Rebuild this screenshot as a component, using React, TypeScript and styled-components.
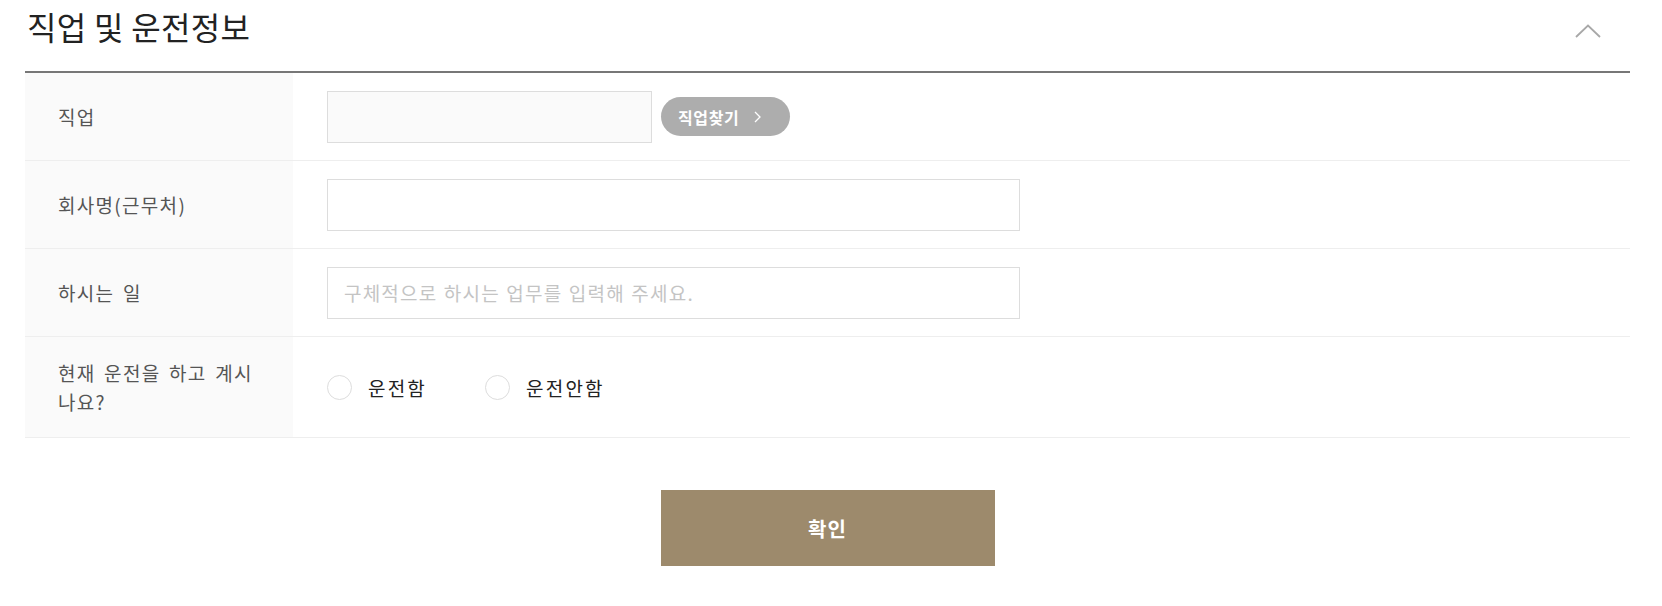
import React from "react";
import styled, { createGlobalStyle } from "styled-components";

const GlobalStyle = createGlobalStyle`
  html, body { margin: 0; padding: 0; background: #fff; }
  body {
    font-family: "Noto Sans CJK KR", "Noto Sans", sans-serif;
    color: #222;
  }
  * { box-sizing: border-box; }
`;

const Page = styled.div`
  padding: 0 32px 40px 25px;
`;

const Header = styled.div`
  display: flex;
  justify-content: space-between;
  align-items: flex-start;
  height: 73px;
  border-bottom: 2px solid #777;
`;

const Title = styled.h2`
  margin: 0;
  padding-left: 2px;
  font-size: 32px;
  font-weight: 400;
  line-height: 52px;
  color: #222;
  letter-spacing: 0.3px;
`;

const ToggleButton = styled.button`
  border: 0;
  background: transparent;
  padding: 0;
  margin: 21px 28px 0 0;
  width: 28px;
  height: 20px;
  display: flex;
  align-items: center;
  justify-content: center;
  cursor: pointer;
`;

const Row = styled.div<{ $tall?: boolean }>`
  display: grid;
  grid-template-columns: 268px 1fr;
  min-height: ${(p) => (p.$tall ? "101px" : "88px")};
  border-bottom: 1px solid #eee;
`;

const Label = styled.div`
  background: #fafafa;
  display: flex;
  align-items: center;
  padding: 0 36px 0 33px;
  font-size: 19px;
  line-height: 29px;
  letter-spacing: 1.3px;
  word-spacing: 3px;
  color: #555;
`;

const Field = styled.div`
  display: flex;
  align-items: center;
  padding-left: 34px;
  gap: 9px;
`;

const TextInput = styled.input<{ $w: number; $filled?: boolean }>`
  width: ${(p) => p.$w}px;
  height: 52px;
  border: 1px solid #ddd;
  background: ${(p) => (p.$filled ? "#fafafa" : "#fff")};
  padding: 0 16px;
  font-family: inherit;
  font-size: 19px;
  letter-spacing: 1.2px;
  word-spacing: 1px;
  color: #222;
  outline: none;
  &::placeholder { color: #c4c4c4; }
`;

const PillButton = styled.button`
  width: 129px;
  height: 39px;
  padding: 0 0 0 17px;
  border: 0;
  border-radius: 20px;
  background: #adadad;
  color: #fff;
  font-family: inherit;
  font-size: 16px;
  font-weight: 700;
  letter-spacing: 0.6px;
  display: flex;
  align-items: center;
  justify-content: flex-start;
  gap: 15px;
  cursor: pointer;
`;

const RadioGroup = styled.div`
  display: flex;
  align-items: center;
  gap: 58px;
`;

const RadioLabel = styled.label`
  display: flex;
  align-items: center;
  gap: 16px;
  font-size: 19px;
  letter-spacing: 2.2px;
  color: #222;
  cursor: pointer;
`;

const RadioCircle = styled.span`
  width: 25px;
  height: 25px;
  border-radius: 50%;
  border: 1px solid #ddd;
  background: #fff;
`;

const Actions = styled.div`
  display: flex;
  justify-content: center;
  padding-top: 52px;
`;

const Confirm = styled.button`
  width: 334px;
  height: 76px;
  border: 0;
  background: #9d8a6c;
  color: #fff;
  font-family: inherit;
  font-size: 20px;
  font-weight: 700;
  letter-spacing: 1px;
  cursor: pointer;
`;

export default function App() {
  return (
    <>
      <GlobalStyle />
      <Page>
        <Header>
          <Title>직업 및 운전정보</Title>
          <ToggleButton aria-label="접기">
            <svg width="26" height="14" viewBox="0 0 26 14">
              <polyline points="1,13 13,1.5 25,13" fill="none" stroke="#a8a8a8" strokeWidth="1.8" />
            </svg>
          </ToggleButton>
        </Header>
        <Row>
          <Label>직업</Label>
          <Field>
            <TextInput $w={325} $filled readOnly />
            <PillButton>
              직업찾기
              <svg width="7" height="12" viewBox="0 0 7 12">
                <polyline points="1,1 6,6 1,11" fill="none" stroke="#fff" strokeWidth="1.3" />
              </svg>
            </PillButton>
          </Field>
        </Row>
        <Row>
          <Label>회사명(근무처)</Label>
          <Field>
            <TextInput $w={693} />
          </Field>
        </Row>
        <Row>
          <Label>하시는 일</Label>
          <Field>
            <TextInput $w={693} placeholder="구체적으로 하시는 업무를 입력해 주세요." />
          </Field>
        </Row>
        <Row $tall>
          <Label>현재 운전을 하고 계시나요?</Label>
          <Field>
            <RadioGroup>
              <RadioLabel>
                <RadioCircle />
                운전함
              </RadioLabel>
              <RadioLabel>
                <RadioCircle />
                운전안함
              </RadioLabel>
            </RadioGroup>
          </Field>
        </Row>
        <Actions>
          <Confirm>확인</Confirm>
        </Actions>
      </Page>
    </>
  );
}
